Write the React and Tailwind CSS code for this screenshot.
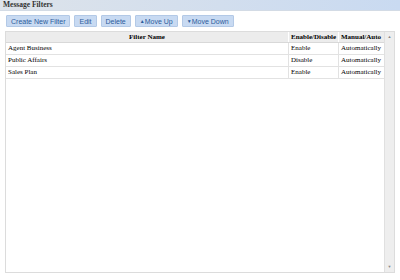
import { useState } from "react";

const filters = [
  { name: "Agent Business", state: "Enable", mode: "Automatically" },
  { name: "Public Affairs", state: "Disable", mode: "Automatically" },
  { name: "Sales Plan", state: "Enable", mode: "Automatically" },
];

const btn =
  "h-[12px] px-[4px] flex items-center bg-[#c8daf2] border border-[#b3c9e6] rounded-[1px] text-[#2c5c9c] text-[7px] leading-none";

export default function App() {
  const [selected, setSelected] = useState(null);

  return (
    <div className="w-[400px] h-[280px] bg-white flex flex-col font-['Liberation_Serif',serif] text-black">
      {/* title */}
      <div className="h-[11px] flex items-center px-[3px] bg-gradient-to-r from-[#dde3ea] to-[#c9daf1] border-b border-[#d3dbe5]">
        <span className="text-[7.5px] font-bold text-[#333] leading-none">Message Filters</span>
      </div>

      {/* toolbar */}
      <div className="flex gap-[4px] pl-[6px] pt-[4px] font-['Liberation_Sans',sans-serif]">
        <button className={btn}>Create New Filter</button>
        <button className={btn}>Edit</button>
        <button className={btn}>Delete</button>
        <button className={btn}>
          <span className="text-[5px]">▲</span>Move Up
        </button>
        <button className={btn}>
          <span className="text-[5px]">▼</span>Move Down
        </button>
      </div>

      {/* table */}
      <div className="mt-[4px] ml-[5px] mr-[5px] h-[242px] border border-[#dcdcdc] flex">
        <div className="flex-1 flex flex-col">
          <div className="h-[11px] flex bg-[#ececec] border-b border-[#d8d8d8] text-[7px] font-bold leading-none">
            <div className="flex-1 flex items-center justify-center border-r border-white">Filter Name</div>
            <div className="w-[50px] flex items-center px-[2px] border-r border-white">Enable/Disable</div>
            <div className="w-[45px] flex items-center px-[2px]">Manual/Auto</div>
          </div>
          {filters.map((f, i) => (
            <div
              key={f.name}
              onClick={() => setSelected(i)}
              className={`h-[12px] flex border-b border-[#e2e2e2] text-[7px] leading-none ${
                selected === i ? "bg-[#dfe8f6]" : ""
              }`}
            >
              <div className="flex-1 flex items-center px-[2px] border-r border-[#e2e2e2]">{f.name}</div>
              <div className="w-[50px] flex items-center px-[2px] border-r border-[#e2e2e2]">{f.state}</div>
              <div className="w-[45px] flex items-center px-[2px]">{f.mode}</div>
            </div>
          ))}
        </div>

        {/* scrollbar */}
        <div className="w-[10px] bg-[#eeeeee] border-l border-[#e0e0e0] flex flex-col justify-between items-center py-[3px]">
          <span className="text-[4px] text-[#888] leading-none">▲</span>
          <span className="text-[4px] text-[#888] leading-none">▼</span>
        </div>
      </div>
    </div>
  );
}
